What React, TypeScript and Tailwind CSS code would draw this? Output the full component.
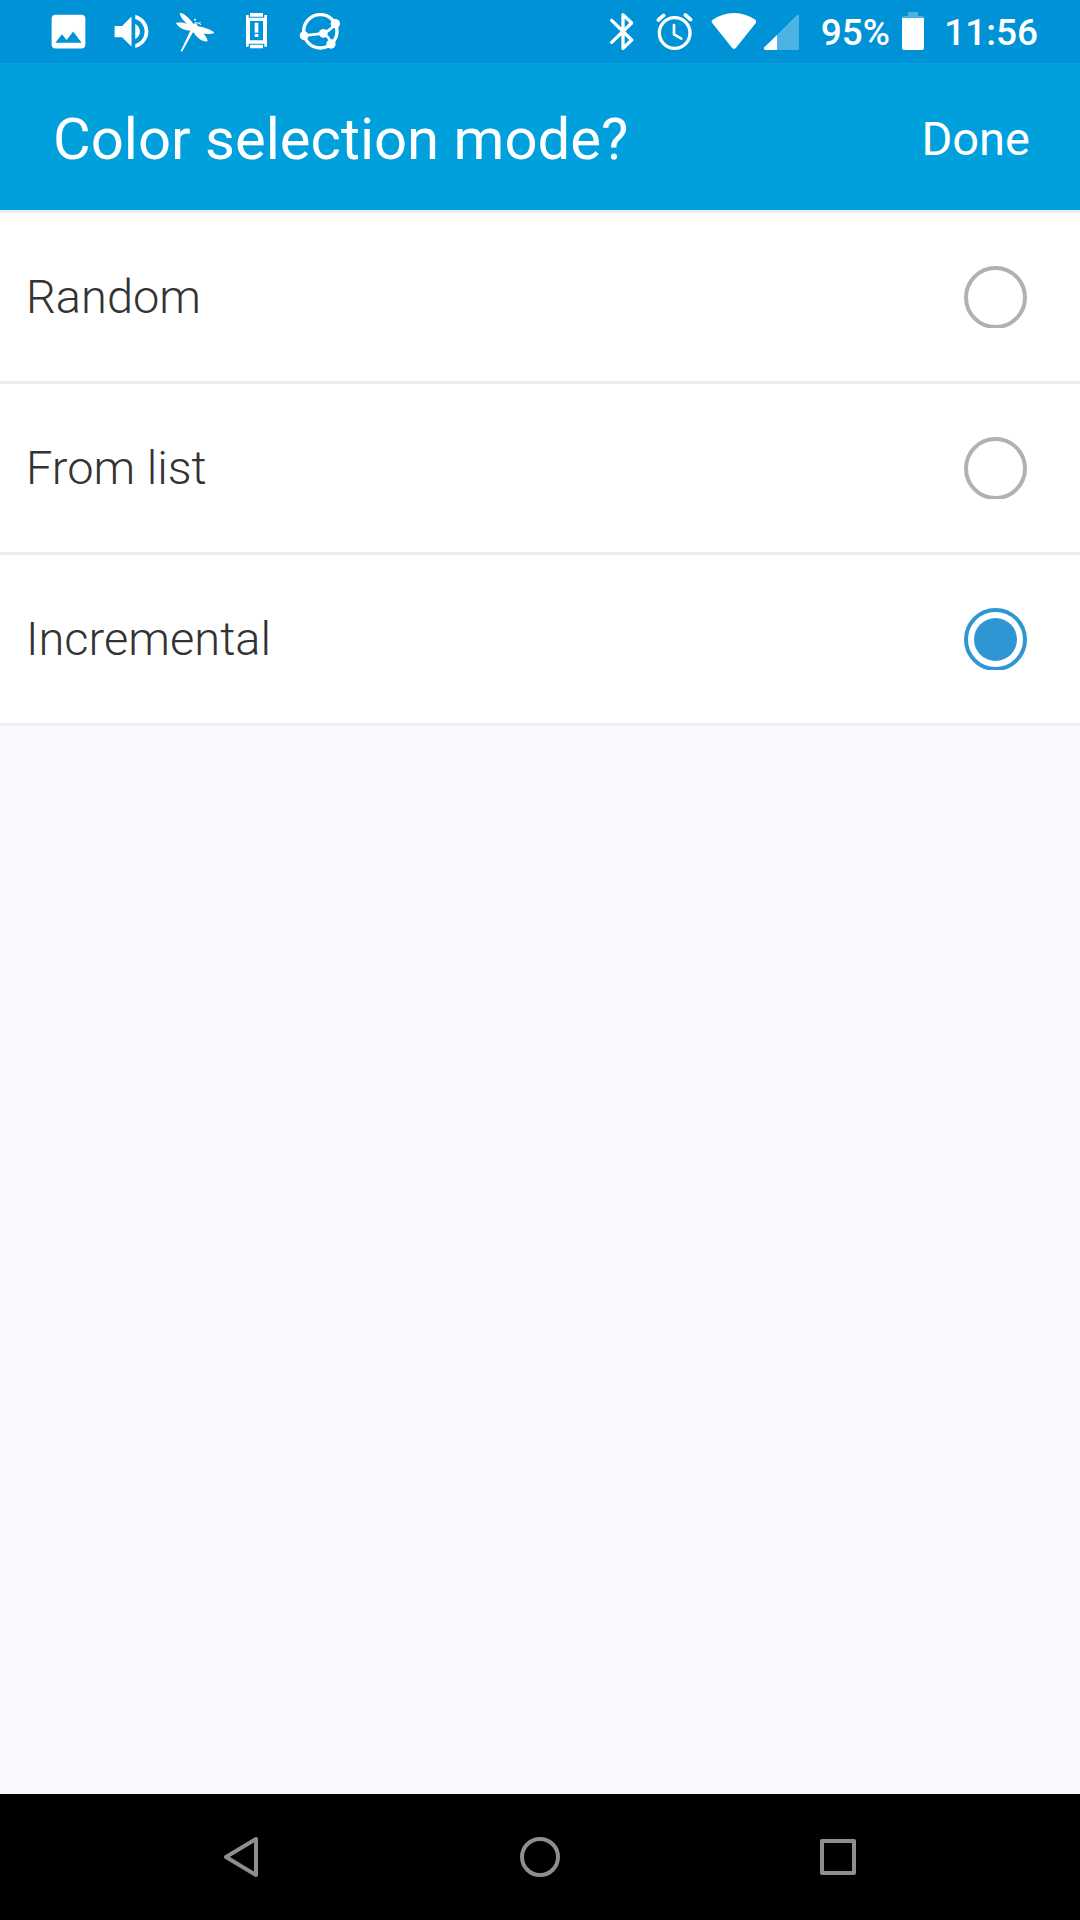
import { useState } from "react";

const options = ["Random", "From list", "Incremental"];

function StatusBar() {
  return (
    <div className="flex h-[63px] items-center justify-between bg-[#0092d6] pr-[42px] pl-[46px] text-white">
      <div className="flex items-center gap-[18px]">
        <svg className="size-[45px]" viewBox="0 0 24 24" fill="currentColor" aria-hidden="true">
          <path d="M21 19V5c0-1.1-.9-2-2-2H5c-1.1 0-2 .9-2 2v14c0 1.1.9 2 2 2h14c1.1 0 2-.9 2-2zM8.500 13.500l2.500 3.010L14.500 12l4.500 6H5l3.500-4.500z" />
        </svg>
        <svg className="size-[45px]" viewBox="0 0 24 24" fill="currentColor" aria-hidden="true">
          <path d="M3 9v6h4l5 5V4L7 9H3zm13.500 3c0-1.770-1.020-3.290-2.500-4.030v8.050c1.480-.730 2.500-2.250 2.500-4.020zM14 3.230v2.060c2.890.860 5 3.540 5 6.710s-2.110 5.850-5 6.710v2.060c4.010-.910 7-4.490 7-8.770s-2.990-7.860-7-8.770z" />
        </svg>
        <svg className="size-[45px]" viewBox="36 27 135 135" fill="currentColor" aria-hidden="true">
          <path d="M59 39C68 36 92 56 103 77L98 84C84 76 62 58 59 39z" />
          <path d="M48 69C62 64 88 72 100 81L98 92C78 94 56 85 48 69z" />
          <path d="M106 77C126 80 150 86 163 98C148 107 120 101 104 90z" />
          <path d="M106 84C126 92 140 108 143 124C126 127 106 110 97 91z" />
          <path d="M98 73Q106 67 113 75L110 90L98 98L66 155L62 153L92 90z" />
          <circle cx="105" cy="59" r="3" />
          <path d="m104 73 2-5 11 2 5-3M117 70l6 4" fill="none" stroke="currentColor" strokeWidth="3" />
        </svg>
        <svg className="size-[45px]" viewBox="225 27 135 135" fill="currentColor" aria-hidden="true">
          <path d="M270 39h39v11h-39zM270 134h39v11h-39z" />
          <path d="M258 45h8v8h47v-8h8v95h-8v-9h-47v9h-8zM270 63v58h39V63z" fillRule="evenodd" />
          <path d="M284 68h11v30h-11zM284 102h11v9h-11z" />
        </svg>
        <svg className="size-[45px]" viewBox="414 27 135 135" fill="none" stroke="currentColor" aria-hidden="true">
          <circle cx="481" cy="94" r="50" strokeWidth="10" />
          <path d="m432 107 58-7M490 100q20-8 37-29M490 100q18 10 24 33" strokeWidth="8" />
          <g fill="currentColor" stroke="none">
            <circle cx="432" cy="107" r="13" />
            <circle cx="490" cy="100" r="13" />
            <circle cx="526" cy="71" r="14" />
            <circle cx="513" cy="132" r="14" />
          </g>
        </svg>
      </div>
      <div className="flex items-center">
        <svg className="mr-2 size-[45px]" viewBox="27 27 135 135" fill="none" stroke="currentColor" strokeWidth="10" strokeLinecap="round" strokeLinejoin="round" aria-hidden="true">
          <path d="m65 61 60 59-26 25V44l26 25-60 58" />
        </svg>
        <svg className="mr-[14px] size-[45px]" viewBox="186 27 135 135" fill="none" stroke="currentColor" strokeWidth="10" strokeLinecap="round" aria-hidden="true">
          <circle cx="254" cy="99" r="46" />
          <path d="m205 60 16-14M286 45l16 14" strokeWidth="11" />
          <path d="M252 75v28l22 13" strokeWidth="8" strokeLinejoin="round" />
        </svg>
        <svg className="mr-[3px] size-[45px]" viewBox="363 27 135 135" fill="currentColor" aria-hidden="true">
          <path d="M366 68q-3-4 1-8 28-20 65-21 37 1 65 21 4 4 1 8l-60 75q-6 7-12 0z" />
        </svg>
        <svg className="mr-[17px] size-[45px]" viewBox="507 27 135 135" fill="currentColor" aria-hidden="true">
          <path d="M561 105v45h61q5 0 5-5V49q-1-7-7-3z" opacity=".3" />
          <path d="M561 105v45h-35q-7-2-3-8z" />
        </svg>
        <span className="pt-[3px] text-[37px] leading-[44px] font-medium">95%</span>
        <svg className="mr-5 ml-3 h-[45px] w-[22px]" viewBox="0 0 22 45" fill="currentColor" aria-hidden="true">
          <path d="M6 3h10v4h4q2 0 2 2H0q0-2 2-2h4z" opacity=".3" />
          <path d="M0 9h22v30q0 2-2 2H2q-2 0-2-2z" />
        </svg>
        <span className="pt-[3px] text-[37px] leading-[44px] font-medium">11:56</span>
      </div>
    </div>
  );
}

function NavBar() {
  return (
    <nav className="flex h-[126px] items-center bg-black px-[93px] text-[#8e8e8e]">
      <button type="button" aria-label="Back" className="flex flex-1 justify-center">
        <svg className="size-[48px]" viewBox="0 0 48 48" fill="none" stroke="currentColor" strokeWidth="4" strokeLinejoin="round">
          <path d="M38 6v36L8 24z" />
        </svg>
      </button>
      <button type="button" aria-label="Home" className="flex flex-1 justify-center">
        <svg className="size-[48px]" viewBox="0 0 48 48" fill="none" stroke="currentColor" strokeWidth="4">
          <circle cx="24" cy="24" r="18" />
        </svg>
      </button>
      <button type="button" aria-label="Recent apps" className="flex flex-1 justify-center">
        <svg className="size-[48px]" viewBox="0 0 48 48" fill="none" stroke="currentColor" strokeWidth="4" strokeLinejoin="round">
          <path d="M8 8h32v32H8z" />
        </svg>
      </button>
    </nav>
  );
}

export default function App() {
  const [mode, setMode] = useState("Incremental");
  return (
    <div className="flex min-h-screen flex-col bg-[#f8f9ff] font-['Roboto',sans-serif]">
      <StatusBar />
      <header className="flex h-[147px] items-center justify-between bg-[#00a0dd] pt-[5px] pr-[50px] pl-[53px] text-white">
        <h1 className="text-[58px] leading-[68px]">Color selection mode?</h1>
        <button type="button" className="text-[47px] leading-[56px]">Done</button>
      </header>
      <main className="flex-1">
        <div role="radiogroup" aria-label="Color selection mode?" className="border-t-[3px] border-[#ebeef2]">
          {options.map((option) => (
            <label
              key={option}
              className="flex h-[171px] items-center justify-between border-b-[3px] border-[#ebeef2] bg-white pr-[53px] pl-[26px] text-[#333]"
            >
              <span className="text-[47px] leading-[56px] font-light">{option}</span>
              <span className="h-[62px] overflow-hidden">
                <input
                  type="radio"
                  name="mode"
                  value={option}
                  checked={mode === option}
                  onChange={() => setMode(option)}
                  className="block size-[63px] appearance-none rounded-full border-4 border-[#b1b1b1] bg-white p-[6px] checked:border-[#2f96d4] checked:bg-[#2f96d4] checked:bg-clip-content"
                />
              </span>
            </label>
          ))}
        </div>
      </main>
      <NavBar />
    </div>
  );
}
